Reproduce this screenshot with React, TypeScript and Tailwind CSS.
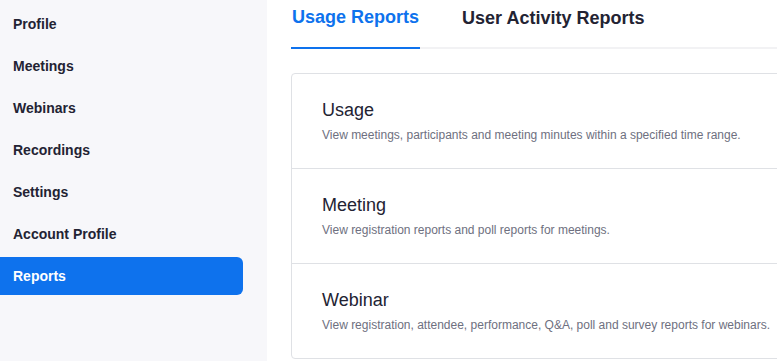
const navItems = [
  "Profile",
  "Meetings",
  "Webinars",
  "Recordings",
  "Settings",
  "Account Profile",
  "Reports",
];

const reports = [
  {
    title: "Usage",
    desc: "View meetings, participants and meeting minutes within a specified time range.",
  },
  {
    title: "Meeting",
    desc: "View registration reports and poll reports for meetings.",
  },
  {
    title: "Webinar",
    desc: "View registration, attendee, performance, Q&A, poll and survey reports for webinars.",
  },
];

export default function App() {
  return (
    <div
      className="flex w-[777px] h-[361px] overflow-hidden bg-white"
      style={{ fontFamily: '"Liberation Sans", Arial, sans-serif' }}
    >
      {/* Sidebar */}
      <aside className="w-[267px] shrink-0 bg-[#f7f7fa] pt-[5px] pr-[24px]">
        <nav className="flex flex-col gap-1">
          {navItems.map((item) => {
            const active = item === "Reports";
            return (
              <div
                key={item}
                className={
                  active
                    ? "h-[38px] flex items-center pl-[13px] rounded-r-[6px] bg-[#0e72ed] text-white text-[14px] font-bold"
                    : "h-[38px] flex items-center pl-[13px] text-[#232333] text-[14px] font-bold"
                }
              >
                {item}
              </div>
            );
          })}
        </nav>
      </aside>

      {/* Main */}
      <main className="flex-1 min-w-0 pl-[24px]">
        {/* Tabs */}
        <div className="flex h-[49px] border-b-2 border-[#f2f2f4] gap-[42px] -mr-[40px]">
          <div className="h-[49px] -mb-[2px] flex items-center border-b-2 border-[#0e72ed] pb-[12px] text-[18px] font-bold text-[#0e72ed] px-px">
            Usage Reports
          </div>
          <div className="h-[49px] flex items-center pb-[12px] text-[18px] font-bold text-[#232333]">
            User Activity Reports
          </div>
        </div>

        {/* Report card */}
        <div className="mt-[24px] -mr-[20px] border border-[#dfe1e5] rounded-[4px] bg-white">
          {reports.map((r, i) => (
            <div
              key={r.title}
              className={
                i > 0
                  ? "border-t border-[#dfe1e5] pt-[24px] pb-[25px] pl-[30px]"
                  : "pt-[24px] pb-[25px] pl-[30px]"
              }
            >
              <div className="text-[18px] leading-[24px] text-[#232333]">{r.title}</div>
              <div className="mt-[5px] text-[12px] leading-[16px] text-[#6e7080] whitespace-nowrap">
                {r.desc}
              </div>
            </div>
          ))}
        </div>
      </main>
    </div>
  );
}
